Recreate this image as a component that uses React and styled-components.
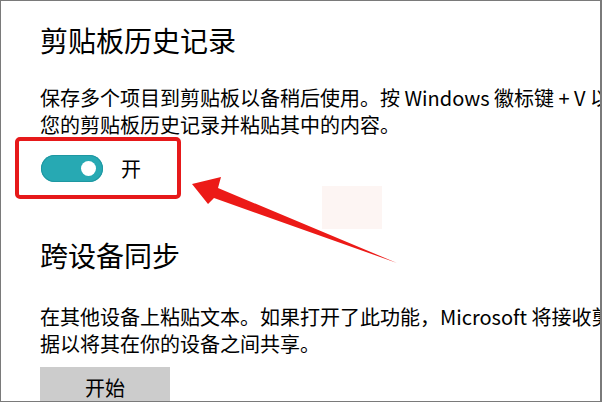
import styled, { createGlobalStyle } from 'styled-components'

const Global = createGlobalStyle`
  html, body {
    margin: 0;
    padding: 0;
    background: #fff;
  }
  body {
    font-family: "Noto Sans CJK SC", "Noto Sans", sans-serif;
    color: #000;
  }
`

const Frame = styled.div`
  position: relative;
  width: 602px;
  height: 402px;
  box-sizing: border-box;
  border: 1px solid #7a7a7a;
  border-right-width: 2px;
  overflow: hidden;
  padding: 19px 0 0 39px;
  background: #fff;
`

const Title = styled.h2`
  margin: 0;
  font-size: 28px;
  font-weight: 400;
  line-height: 40px;
  white-space: nowrap;
  margin-top: ${p => p.$top || 0}px;
`

const Desc = styled.p`
  margin: ${p => p.$top || 0}px 0 0;
  font-size: 20px;
  font-weight: 400;
  line-height: 27px;
  white-space: nowrap;
  color: #000;
`

const Highlight = styled.div`
  display: flex;
  align-items: center;
  gap: 18px;
  box-sizing: border-box;
  width: 166px;
  height: 62px;
  margin: -1px 0 0 -25px;
  padding-left: 22px;
  border: 4px solid #e6191a;
  border-radius: 5px;
`

const Toggle = styled.div`
  position: relative;
  width: 62px;
  height: 27px;
  border-radius: 14px;
  background: #27a9b3;
  box-shadow: inset 0 0 0 1px #1e97a1;
  flex: none;

  &::after {
    content: '';
    position: absolute;
    right: 7px;
    top: 6px;
    width: 15px;
    height: 15px;
    border-radius: 50%;
    background: #fff;
  }
`

const ToggleLabel = styled.span`
  font-size: 20px;
  line-height: 27px;
`

const Button = styled.button`
  display: block;
  margin-top: 10px;
  width: 130px;
  height: 42px;
  border: none;
  background: #cccccc;
  font-family: inherit;
  font-size: 20px;
  line-height: 42px;
  color: #000;
  padding: 0;
`

const Smudge = styled.div`
  position: absolute;
  left: 321px;
  top: 185px;
  width: 60px;
  height: 43px;
  background: #fdf5f3;
`

const Arrow = styled.svg`
  position: absolute;
  left: 0;
  top: 0;
  pointer-events: none;
`

export default function App() {
  return (
    <>
      <Global />
      <Frame>
        <Smudge />
        <Title>剪贴板历史记录</Title>
        <Desc $top={24}>
          保存多个项目到剪贴板以备稍后使用。按 Windows 徽标键 + V 以查看
          <br />
          您的剪贴板历史记录并粘贴其中的内容。
        </Desc>
        <Highlight>
          <Toggle />
          <ToggleLabel>开</ToggleLabel>
        </Highlight>
        <Title $top={36}>跨设备同步</Title>
        <Desc $top={28}>
          在其他设备上粘贴文本。如果打开了此功能，Microsoft 将接收剪贴板数
          <br />
          据以将其在你的设备之间共享。
        </Desc>
        <Button>开始</Button>
        <Arrow width="602" height="402" viewBox="0 0 602 402">
          <polygon
            points="191,183 220,176 217,187 396,262 213,197 207,203"
            fill="#ec1a17"
          />
        </Arrow>
      </Frame>
    </>
  )
}
